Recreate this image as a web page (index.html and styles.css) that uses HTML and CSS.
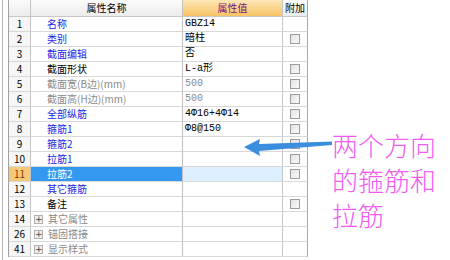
FILE: index.html
```html
<!DOCTYPE html>
<html lang="zh">
<head>
    <meta charset="UTF-8">
    <title>属性编辑</title>
    <link rel="stylesheet" href="styles.css">
</head>
<body>
    <div class="panel">
        <div class="grid">
            <div class="row head">
                <div class="num"></div>
                <div class="name">属性名称</div>
                <div class="value">属性值</div>
                <div class="attach">附加</div>
            </div>
            <div class="row">
                <div class="num">1</div>
                <div class="name blue">名称</div>
                <div class="value">GBZ14</div>
                <div class="attach"></div>
            </div>
            <div class="row">
                <div class="num">2</div>
                <div class="name blue">类别</div>
                <div class="value">暗柱</div>
                <div class="attach"><span class="check"></span></div>
            </div>
            <div class="row">
                <div class="num">3</div>
                <div class="name blue">截面编辑</div>
                <div class="value">否</div>
                <div class="attach"></div>
            </div>
            <div class="row">
                <div class="num">4</div>
                <div class="name">截面形状</div>
                <div class="value">L-a形</div>
                <div class="attach"><span class="check"></span></div>
            </div>
            <div class="row">
                <div class="num">5</div>
                <div class="name gray">截面宽(B边)(mm)</div>
                <div class="value gray">500</div>
                <div class="attach"><span class="check"></span></div>
            </div>
            <div class="row">
                <div class="num">6</div>
                <div class="name gray">截面高(H边)(mm)</div>
                <div class="value gray">500</div>
                <div class="attach"><span class="check"></span></div>
            </div>
            <div class="row">
                <div class="num">7</div>
                <div class="name blue">全部纵筋</div>
                <div class="value">4Φ16+4Φ14</div>
                <div class="attach"><span class="check"></span></div>
            </div>
            <div class="row">
                <div class="num">8</div>
                <div class="name blue">箍筋1</div>
                <div class="value">Φ8@150</div>
                <div class="attach"><span class="check"></span></div>
            </div>
            <div class="row">
                <div class="num">9</div>
                <div class="name blue">箍筋2</div>
                <div class="value"></div>
                <div class="attach"><span class="check"></span></div>
            </div>
            <div class="row">
                <div class="num">10</div>
                <div class="name blue">拉筋1</div>
                <div class="value"></div>
                <div class="attach"><span class="check"></span></div>
            </div>
            <div class="row selected">
                <div class="num">11</div>
                <div class="name">拉筋2</div>
                <div class="value"></div>
                <div class="attach"><span class="check"></span></div>
            </div>
            <div class="row">
                <div class="num">12</div>
                <div class="name blue">其它箍筋</div>
                <div class="value"></div>
                <div class="attach"></div>
            </div>
            <div class="row">
                <div class="num">13</div>
                <div class="name">备注</div>
                <div class="value"></div>
                <div class="attach"><span class="check"></span></div>
            </div>
            <div class="row">
                <div class="num">14</div>
                <div class="name gray group"><span class="plus">+</span>其它属性</div>
                <div class="value"></div>
                <div class="attach"></div>
            </div>
            <div class="row">
                <div class="num">26</div>
                <div class="name gray group"><span class="plus">+</span>锚固搭接</div>
                <div class="value"></div>
                <div class="attach"></div>
            </div>
            <div class="row">
                <div class="num">41</div>
                <div class="name gray group"><span class="plus">+</span>显示样式</div>
                <div class="value"></div>
                <div class="attach"></div>
            </div>
        </div>
    </div>

    <!-- 标注：箭头和说明文字 -->
    <svg class="arrow" width="100" height="24" viewBox="240 136 100 24">
        <polygon points="244,147 260,139 259,144 332,141.5 332,145 259,151 260,156" fill="#3b8ede"/>
    </svg>
    <div class="note">两个方向<br>的箍筋和<br>拉筋</div>
</body>
</html>
```

FILE: styles.css
```css
body {
    margin: 0;
    background: #fff;
    font-family: "Noto Sans CJK SC", sans-serif;
    font-size: 10px;
    overflow: hidden;
}

.panel {
    margin-left: 2px;
    border-left: 1px solid #b4b4b4;
    padding-left: 5px;
    height: 260px;
}

.grid {
    border-left: 1px solid #a0a0a0;
    width: 299px;
}

.row {
    display: grid;
    grid-template-columns: 22px 152px 100px 25px;
    height: 15px;
}

.row > div {
    box-sizing: border-box;
    border-right: 1px solid #d0d0d0;
    border-bottom: 1px solid #d8d8d8;
    display: flex;
    align-items: center;
    white-space: nowrap;
    overflow: hidden;
    line-height: 14px;
}

.row .num {
    justify-content: center;
    background: #f6f6f6;
    border-right-color: #c4c4c4;
    color: #000;
}

.row .name {
    padding-left: 16px;
    color: #000;
    border-right-color: #c0c0c0;
}

.row .value {
    padding-left: 2px;
    font-family: "Liberation Mono", "Noto Sans CJK SC", monospace;
    border-right-color: #c8c8c8;
}

.row .attach {
    justify-content: center;
    border-right-color: #a8a8a8;
}

.row .blue {
    color: #2424e8;
}

.row .gray {
    color: #8a8a8a;
}

.row .group {
    padding-left: 3px;
}

.plus {
    box-sizing: border-box;
    width: 9px;
    height: 9px;
    margin-right: 5px;
    border: 1px solid #b0b0b0;
    background: #eeeeee;
    color: #444;
    font-size: 9px;
    line-height: 7px;
    text-align: center;
    font-family: "DejaVu Sans", sans-serif;
}

.check {
    box-sizing: border-box;
    width: 10px;
    height: 10px;
    border: 1px solid #9c9c9c;
    background: linear-gradient(135deg, #e2e2e2, #fafafa);
}

/* en-tête */
.row.head {
    height: 17px;
}

.row.head > div {
    background: linear-gradient(#fbfbfb, #ececec);
    border-bottom-color: #c8c8c8;
    justify-content: center;
    padding: 0;
}

.row.head .value {
    background: linear-gradient(#fde6b6, #f7c266);
    color: #7a137a;
    font-family: "Noto Sans CJK SC", sans-serif;
}

/* ligne sélectionnée */
.row.selected .num {
    background: #f8c879;
    color: #7a3b00;
}

.row.selected .name {
    background: #3399f0;
    color: #fff;
}

.row.selected .value {
    background: #ddeeff;
}

.arrow {
    position: absolute;
    left: 240px;
    top: 136px;
}

.note {
    position: absolute;
    left: 332px;
    top: 127px;
    color: #f25af2;
    font-size: 26px;
    line-height: 35px;
    font-weight: 300;
}
```
